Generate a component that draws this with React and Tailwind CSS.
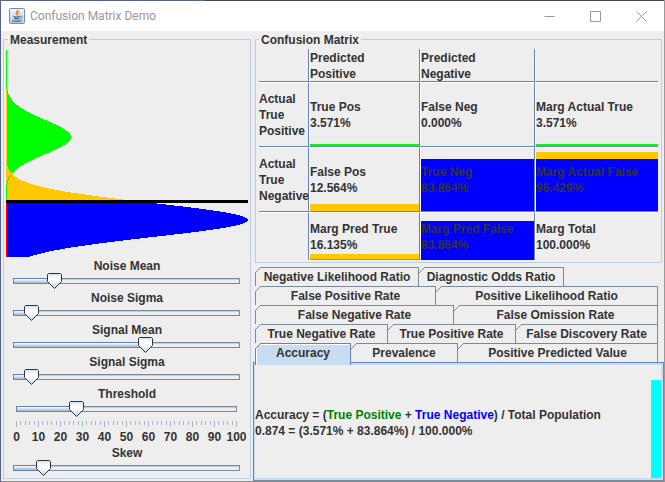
import { useState } from "react";

const MU_SIGNAL = 87;
const MU_NOISE = 170;
const SIGMA = 17;
const THRESHOLD_Y = 151;
const CHART_H = 207;

const bell = (y, mu, peak) =>
  Math.max(1, Math.round(peak * Math.exp(-((y - mu) ** 2) / (2 * SIGMA * SIGMA))));

function area(from, to, mu, peak) {
  let d = `M0 ${from}`;
  for (let y = from; y < to; y += 1) {
    const w = bell(y + 0.5, mu, peak);
    d += ` L${w} ${y} L${w} ${y + 1}`;
  }
  return `${d} L0 ${to} Z`;
}

function outline(from, to, mu, peak) {
  const cells = [];
  for (let y = from; y < to; y += 1) {
    cells.push(<rect key={y} x={bell(y + 0.5, mu, peak) - 1} y={y} width="1" height="1" fill="#00ff00" />);
  }
  return cells;
}

function Distribution() {
  return (
    <svg
      viewBox="0 0 242 207"
      preserveAspectRatio="none"
      shapeRendering="crispEdges"
      className="block h-[207px] w-full"
      role="img"
      aria-label="Signal and noise distributions"
    >
      <path d={area(0, THRESHOLD_Y, MU_SIGNAL, 65)} fill="#00ff00" />
      <path d={area(39, THRESHOLD_Y, MU_NOISE, 242)} fill="#ffc800" />
      {outline(125, THRESHOLD_Y - 1, MU_SIGNAL, 65)}
      <path d={area(THRESHOLD_Y, CHART_H, MU_NOISE, 242)} fill="#0000ff" />
      <rect x="0" y="153" width="1" height="54" fill="#ff0000" />
      <rect x="0" y="150" width="242" height="3" fill="#000000" />
    </svg>
  );
}

function Slider({ id, label, initial, inset, children }) {
  const [value, setValue] = useState(initial);
  return (
    <div>
      <label htmlFor={id} className="block h-4 pt-px text-center">
        {label}
      </label>
      <div className={inset}>
        <div className="relative h-4">
          <div className="absolute inset-x-0 top-[5px] h-[6px] border border-[#7a8a99] shadow-[inset_0_1px_0_#b8cfe5]" />
          <div
            className="absolute left-0 top-[5px] h-[6px] border border-[#6382bf] bg-linear-to-b from-white to-[#a3b8cc]"
            style={{ width: `${value}%` }}
          />
          <input
            id={id}
            type="range"
            min="0"
            max="100"
            step="0.1"
            value={value}
            onChange={(e) => setValue(Number(e.target.value))}
            className="absolute inset-0 m-0 h-full w-full cursor-default appearance-none bg-transparent outline-none [&::-webkit-slider-thumb]:h-4 [&::-webkit-slider-thumb]:w-px [&::-webkit-slider-thumb]:appearance-none"
          />
          <svg
            width="15"
            height="16"
            viewBox="0 0 15 16"
            className="pointer-events-none absolute top-0 -ml-[7px]"
            style={{ left: `${value}%` }}
            aria-hidden="true"
          >
            <defs>
              <linearGradient id={`${id}-thumb`} x1="0" y1="0" x2="0" y2="1">
                <stop offset="0" stopColor="#c8ddf2" />
                <stop offset="0.3" stopColor="#ffffff" />
                <stop offset="0.5" stopColor="#ffffff" />
                <stop offset="1" stopColor="#b8cfe5" />
              </linearGradient>
            </defs>
            <path d="M1.5 0.5H13.5L14.5 1.5V8.5L7.5 15.5L0.5 8.5V1.5Z" fill={`url(#${id}-thumb)`} stroke="#333333" />
          </svg>
        </div>
        {children}
      </div>
    </div>
  );
}

const MARKS = [0, 10, 20, 30, 40, 50, 60, 70, 80, 90, 100];

function Scale() {
  return (
    <>
      <svg
        viewBox="0 0 221 6"
        preserveAspectRatio="none"
        shapeRendering="crispEdges"
        className="mt-1 block h-[6px] w-full"
        aria-hidden="true"
      >
        {Array.from({ length: 51 }, (_, i) => (
          <rect key={i} x={Math.round(i * 4.4)} y="0" width="1" height={i % 5 ? 4 : 6} fill="#a3b8cc" />
        ))}
      </svg>
      <div className="mt-px flex h-4 justify-between pt-px">
        {MARKS.map((m) => (
          <span key={m} className="flex w-px justify-center">
            {m}
          </span>
        ))}
      </div>
    </>
  );
}

function Cell({ lines, bars = [], edge = "" }) {
  return (
    <td className={`relative p-0 align-middle ${edge}`}>
      <div className="absolute inset-0 flex flex-col justify-end">
        {bars.map((b) => (
          <div key={b} className={b} />
        ))}
      </div>
      <div className="relative whitespace-nowrap">
        {lines.map((l) => (
          <div key={l}>{l}</div>
        ))}
      </div>
    </td>
  );
}

const RIGHT = "border-r border-r-[#6382bf]";
const LEFT = "border-l border-l-white";
const BOTTOM = "border-b border-b-[#6382bf]";
const TOP = "border-t border-t-white";

function Matrix() {
  return (
    <table className="w-full table-fixed border-separate border-spacing-0 text-left">
      <colgroup>
        <col className="w-[50px]" />
        <col className="w-[111px]" />
        <col className="w-[115px]" />
        <col />
      </colgroup>
      <thead>
        <tr className="h-[33px]">
          <td className={`p-0 ${RIGHT} ${BOTTOM}`} />
          <th scope="col" className={`p-0 ${LEFT} ${RIGHT} ${BOTTOM}`}>
            <div className="h-8 pt-px">
              Predicted<br />Positive
            </div>
          </th>
          <th scope="col" className={`p-0 ${LEFT} ${RIGHT} ${BOTTOM}`}>
            <div className="h-8 pt-px">
              Predicted<br />Negative
            </div>
          </th>
          <td className={`p-0 ${LEFT} ${BOTTOM}`} />
        </tr>
      </thead>
      <tbody>
        <tr className="h-[65px]">
          <th scope="row" className={`p-0 ${RIGHT} ${TOP} ${BOTTOM}`}>
            Actual<br />True<br />Positive
          </th>
          <Cell edge={`${LEFT} ${RIGHT} ${TOP} ${BOTTOM}`} lines={["True Pos", "3.571%"]} bars={["h-[2px] bg-[#00ff00]"]} />
          <Cell edge={`${LEFT} ${RIGHT} ${TOP} ${BOTTOM}`} lines={["False Neg", "0.000%"]} />
          <Cell edge={`${LEFT} ${TOP} ${BOTTOM}`} lines={["Marg Actual True", "3.571%"]} bars={["h-[2px] bg-[#00ff00]"]} />
        </tr>
        <tr className="h-[65px]">
          <th scope="row" className={`p-0 ${RIGHT} ${TOP} ${BOTTOM}`}>
            Actual<br />True<br />Negative
          </th>
          <Cell edge={`${LEFT} ${RIGHT} ${TOP} ${BOTTOM}`} lines={["False Pos", "12.564%"]} bars={["h-[7px] bg-[#ffc800]"]} />
          <Cell edge={`${LEFT} ${RIGHT} ${TOP} ${BOTTOM}`} lines={["True Neg", "83.864%"]} bars={["h-[52px] bg-[#0000ff]"]} />
          <Cell
            edge={`${LEFT} ${TOP} ${BOTTOM}`}
            lines={["Marg Actual False", "96.429%"]}
            bars={["h-[7px] bg-[#ffc800]", "h-[52px] bg-[#0000ff]"]}
          />
        </tr>
        <tr className="h-[48px]">
          <td className={`p-0 ${RIGHT} ${TOP}`} />
          <Cell
            edge={`${LEFT} ${RIGHT} ${TOP}`}
            lines={["Marg Pred True", "16.135%"]}
            bars={["h-[5px] bg-[#ffc800]", "h-px bg-[#00ff00]"]}
          />
          <Cell edge={`${LEFT} ${RIGHT} ${TOP}`} lines={["Marg Pred False", "83.864%"]} bars={["h-[39px] bg-[#0000ff]"]} />
          <Cell edge={`${LEFT} ${TOP}`} lines={["Marg Total", "100.000%"]} />
        </tr>
      </tbody>
    </table>
  );
}

const TAB_ROWS = [
  [
    { name: "Negative Likelihood Ratio", size: "flex-[162_0_0px]" },
    { name: "Diagnostic Odds Ratio", size: "flex-[144_0_0px]" },
    { size: "flex-[94_0_0px]" },
  ],
  [
    { name: "False Positive Rate", size: "flex-[179_0_0px]" },
    { name: "Positive Likelihood Ratio", size: "flex-[221_0_0px]" },
  ],
  [
    { name: "False Negative Rate", size: "flex-[197_0_0px]" },
    { name: "False Omission Rate", size: "flex-[203_0_0px]" },
  ],
  [
    { name: "True Negative Rate", size: "flex-[131_0_0px]" },
    { name: "True Positive Rate", size: "flex-[127_0_0px]" },
    { name: "False Discovery Rate", size: "flex-[141_0_0px]" },
  ],
  [
    { name: "Accuracy", size: "flex-[94_0_0px]", selected: true },
    { name: "Prevalence", size: "flex-[106_0_0px]" },
    { name: "Positive Predicted Value", size: "flex-[199_0_0px]" },
  ],
];

function Tab({ name, size, selected, first }) {
  const line = selected ? "#6382bf" : "#7a8a99";
  return (
    <button
      type="button"
      role="tab"
      aria-selected={Boolean(selected)}
      className={`relative whitespace-nowrap border-r border-t font-bold ${size} ${first ? "border-l" : ""} ${
        selected
          ? "z-10 -mb-[3px] border-[#6382bf] bg-[#c8ddf2] pb-[3px] shadow-[inset_1px_1px_0_#ffffff]"
          : "border-[#7a8a99]"
      }`}
    >
      <svg
        width="6"
        height="6"
        viewBox="0 0 6 6"
        className={`absolute -top-px ${first ? "-left-px" : "left-0"}`}
        aria-hidden="true"
      >
        <path d="M0 0H6L0 6Z" fill="#eeeeee" />
        <path d="M0 6L6 0" stroke={line} strokeWidth="1" />
      </svg>
      {name}
    </button>
  );
}

function JavaIcon() {
  return (
    <svg width="16" height="16" viewBox="0 0 16 16" aria-hidden="true">
      <defs>
        <linearGradient id="java-tile" x1="0" y1="0" x2="0" y2="1">
          <stop offset="0" stopColor="#f4f7fa" />
          <stop offset="1" stopColor="#b9cad8" />
        </linearGradient>
      </defs>
      <rect x="0.5" y="0.5" width="15" height="15" rx="1" fill="url(#java-tile)" stroke="#6f8ea8" />
      <path d="M8.8 1.6C9.4 3.4 5.4 4.2 7.6 7.2M10.4 3.8C8 5 8.4 5.6 8.9 7.2" fill="none" stroke="#e5772a" strokeWidth="1.2" />
      <path d="M4.4 8.4C6 9.2 9 9.2 10.8 8.4M5 10.4C6.5 11 8.6 11 10.2 10.4M3 12.4C5.5 13.8 10 13.7 12.4 12.4" fill="none" stroke="#3f6f95" strokeWidth="1.2" />
      <path d="M11.2 8.2C13.4 7.8 13.2 10 11 10.6" fill="none" stroke="#3f6f95" />
    </svg>
  );
}

function WindowButton({ label, d }) {
  return (
    <button type="button" aria-label={label} className="flex h-[30px] w-[46px] items-center justify-center">
      <svg width="11" height="11" viewBox="0 0 11 11" aria-hidden="true">
        <path d={d} fill="none" stroke="#999999" />
      </svg>
    </button>
  );
}

export default function App() {
  return (
    <div className="w-full border-x border-b border-l-[#56648c] border-b-[#8a8a8a] border-r-[#999999] bg-[#eeeeee] font-['Liberation_Sans',Arial,sans-serif] text-xs font-bold leading-4 text-[#333333]">
      <div className="flex h-px">
        <div className="w-[204px] bg-[#56648c]" />
        <div className="flex-1 bg-[#444444]" />
      </div>
      <header className="flex h-[30px] items-center bg-white pl-2">
        <JavaIcon />
        <h1 className="ml-[5px] flex-1 font-[Roboto,'Noto_Sans',sans-serif] font-normal text-[#999999]">
          Confusion Matrix Demo
        </h1>
        <WindowButton label="Minimize" d="M0.5 5.5H10.5" />
        <WindowButton label="Maximize" d="M0.5 0.5H10.5V10.5H0.5Z" />
        <WindowButton label="Close" d="M0.5 0.5L10.5 10.5M10.5 0.5L0.5 10.5" />
      </header>

      <main className="flex">
        <fieldset className="mb-[2px] ml-[2px] w-[248px] shrink-0 self-start border border-[#b8cfe5] px-[2px] pb-[2px]">
          <legend className="ml-[2px] h-4 px-[2px] pt-px">Measurement</legend>
          <div className="pt-[3px]">
            <Distribution />
            <Slider id="noise-mean" label="Noise Mean" initial={18.1} inset="ml-[7px] mr-[8px]" />
            <Slider id="noise-sigma" label="Noise Sigma" initial={8} inset="ml-[7px] mr-[8px]" />
            <Slider id="signal-mean" label="Signal Mean" initial={58.1} inset="ml-[7px] mr-[8px]" />
            <Slider id="signal-sigma" label="Signal Sigma" initial={8} inset="ml-[7px] mr-[8px]" />
            <Slider id="threshold" label="Threshold" initial={27} inset="ml-[10px] mr-[11px]">
              <Scale />
            </Slider>
            <Slider id="skew" label="Skew" initial={13.3} inset="ml-[7px] mr-[8px]" />
          </div>
        </fieldset>

        <div className="ml-[2px] flex min-w-0 flex-1 flex-col">
          <fieldset className="ml-[2px] mr-[2px] min-w-0 border border-[#b8cfe5] px-[3px] pb-[2px]">
            <legend className="h-4 px-[2px] pt-px">Confusion Matrix</legend>
            <div className="pt-[2px]">
              <Matrix />
            </div>
          </fieldset>

          <div role="tablist" className="ml-[2px] mr-[6px] mt-1">
            {TAB_ROWS.map((row) => (
              <div key={row[0].name} className="flex h-[19px] items-stretch">
                {row.map((tab, i) =>
                  tab.name ? (
                    <Tab key={tab.name} {...tab} first={i === 0} />
                  ) : (
                    <div key="rest" className={tab.size} />
                  )
                )}
              </div>
            ))}
          </div>

          <section
            role="tabpanel"
            aria-label="Accuracy"
            className="flex flex-1 border border-b-[#7a8a99] border-l-[#6382bf] border-r-[#7a8a99] border-t-[#6382bf]"
          >
            <div className="flex flex-1 items-center border-y-2 border-l border-r-2 border-[#c8ddf2]">
              <p className="flex-1 pt-[2px]">
                Accuracy = (<span className="text-[#008000]">True Positive</span> +{" "}
                <span className="text-[#0000ff]">True Negative</span>) / Total Population
                <br />
                0.874 = (3.571% + 83.864%) / 100.000%
              </p>
              <div className="h-[87%] w-[10px] self-end bg-[#00ffff]" />
            </div>
          </section>
        </div>
      </main>
    </div>
  );
}
